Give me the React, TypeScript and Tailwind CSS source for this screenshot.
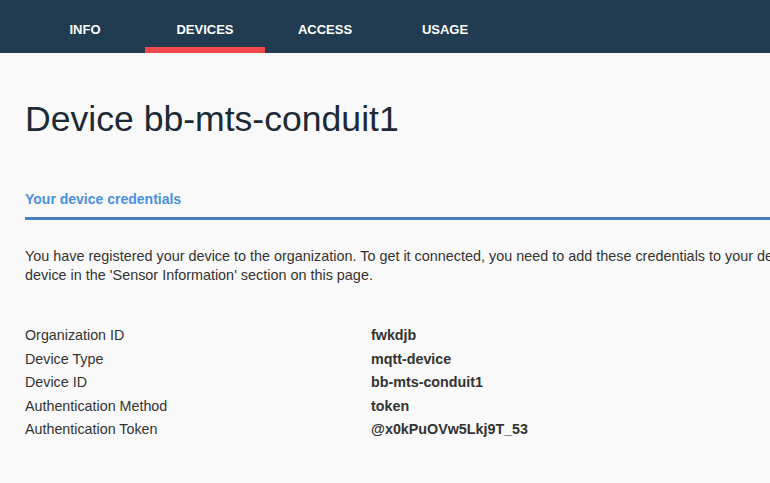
export default function App() {
  const tabs = ["INFO", "DEVICES", "ACCESS", "USAGE"];
  const rows = [
    ["Organization ID", "fwkdjb"],
    ["Device Type", "mqtt-device"],
    ["Device ID", "bb-mts-conduit1"],
    ["Authentication Method", "token"],
    ["Authentication Token", "@x0kPuOVw5Lkj9T_53"],
  ];

  return (
    <div className="w-[770px] h-[483px] overflow-hidden bg-[#f9f9f9] font-['Liberation_Sans',Arial,sans-serif]">
      {/* Top tabs */}
      <nav className="h-[53px] bg-[#213b50] flex pl-[25px]">
        {tabs.map((t) => (
          <div
            key={t}
            className={
              "w-[120px] flex items-center justify-center text-[13px] font-bold text-white border-b-[6px] pt-[12px] " +
              (t === "DEVICES" ? "border-[#f1484b]" : "border-transparent")
            }
          >
            {t}
          </div>
        ))}
      </nav>

      <div className="w-[1100px] px-[25px]">
        <h1 className="mt-[45px] text-[35.6px] leading-[42px] text-[#1c2a36]">
          Device bb-mts-conduit1
        </h1>

        {/* Credentials section */}
        <div className="mt-[50px] border-b-[3px] border-[#4a7fbf] pb-[9px]">
          <h2 className="text-[14px] leading-[18px] font-bold text-[#4a90e2]">
            Your device credentials
          </h2>
        </div>

        <p className="mt-[27px] text-[14.4px] leading-[19px] text-[#333]">
          You have registered your device to the organization. To get it connected, you need to add these credentials to your device
          <br />
          device in the 'Sensor Information' section on this page.
        </p>
      </div>

      <div className="px-[25px] mt-[39px] text-[14.3px] text-[#333]">
        {rows.map(([k, v]) => (
          <div key={k} className="flex h-[23.5px] items-center">
            <span className="w-[346px]">{k}</span>
            <span className="font-bold">{v}</span>
          </div>
        ))}
      </div>
    </div>
  );
}
